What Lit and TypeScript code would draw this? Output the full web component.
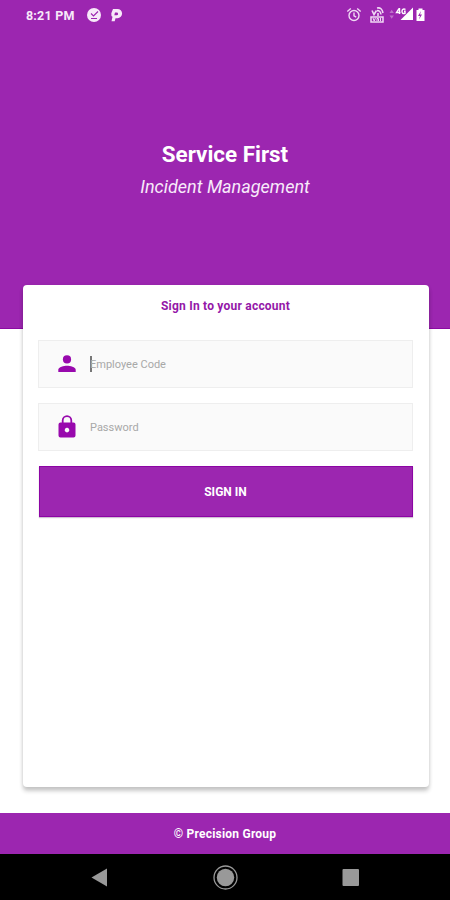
import { LitElement, html, css, svg } from "lit";
import { customElement } from "lit/decorators.js";

const person = svg`<circle cx="9" cy="4.400" r="4.100"/><path d="M.3 17v-2.200C.3 12 6 10.800 9 10.800s8.700 1.200 8.700 4V17z"/>`;

@customElement("app-root")
export class AppRoot extends LitElement {
  static styles = css`
    :host {
      display: flex;
      flex-direction: column;
      width: 450px;
      height: 900px;
      overflow: hidden;
      background: #fff;
      font-family: Roboto, "Liberation Sans", sans-serif;
      --purple: #9c26b0;
    }
    * { box-sizing: border-box; }
    svg { display: block; flex: none; }
    .hero {
      flex: none;
      height: 329px;
      background: var(--purple);
      border-bottom: 1px solid #8c0aa3;
      color: #fff;
      text-align: center;
    }
    .status {
      display: flex;
      align-items: center;
      height: 30px;
      padding: 0 25px 0 26px;
      color: #f7e9f9;
    }
    .time { font-size: 12.500px; font-weight: 700; letter-spacing: .2px; width: 60px; text-align: left; white-space: nowrap; }
    .right { margin-left: auto; }
    h1 { margin: 110px 0 0; font-size: 22.400px; line-height: 28px; font-weight: 700; }
    .sub { margin: 7px 0 0; font-size: 18px; line-height: 24px; font-style: italic; color: #f8eafa; }
    .card {
      flex: none;
      height: 502px;
      margin: -44px 21.500px 0 22.500px;
      padding: 0 15.500px;
      background: #fff;
      border-radius: 4px;
      box-shadow: 0 4px 4px rgba(0, 0, 0, .2), 0 1px 4px rgba(0, 0, 0, .08);
    }
    .title {
      margin: 0 0 14px;
      padding-top: 11px;
      height: 41px;
      text-align: center;
      font-size: 12px;
      line-height: 20px;
      font-weight: 700;
      letter-spacing: .22px;
      color: #9417a8;
    }
    .field {
      display: flex;
      align-items: center;
      height: 48px;
      margin-bottom: 15px;
      padding-left: 19px;
      background: #fafafa;
      border: 1.500px solid #eee;
      font-size: 11px;
      color: #a8a8a8;
    }
    .icon { width: 18px; margin-right: 14px; fill: #9809ad; }
    .caret { width: 1.500px; height: 16px; background: #777; margin-right: -1.500px; }
    .button {
      display: flex;
      align-items: center;
      justify-content: center;
      width: 374px;
      height: 51px;
      margin: 0 auto;
      border: 1px solid #8c05a4;
      background: var(--purple);
      color: #fff;
      font: 700 12px Roboto, sans-serif;
      box-shadow: 0 1px 1px rgba(100, 50, 110, .3);
    }
    .footer {
      flex: none;
      height: 41px;
      margin-top: 26px;
      background: var(--purple);
      color: #fff;
      text-align: center;
      font-size: 12px;
      line-height: 42px;
      font-weight: 700;
      letter-spacing: .22px;
    }
    .nav { flex: 1; background: #000; }
  `;

  render() {
    return html`
      <header class="hero">
        <div class="status">
          <span class="time">8:21 PM</span>
          <svg width="40" height="20" viewBox="86 5 40 20">
            <circle cx="94" cy="15" r="7" fill="#f7e9f9"/>
            <path d="M91 13.500l2.500 2.500 4.500-4.500M91 18.500h6" fill="none" stroke="#9c26b0" stroke-width="1.100"/>
            <path fill-rule="evenodd" d="M113 9h4.500a4.600 4.600 0 0 1 0 9.200h-2l-.8 3h-3.200l1-4.500q-1.500-.7-1.200-3.500zM115 12.500l-.7 2.800h2.400a1.400 1.400 0 0 0 0-2.800z" fill="#f7e9f9"/>
          </svg>
          <svg class="right" width="80" height="20" viewBox="345 5 80 20">
            <g fill="none" stroke="#f0d9f4" stroke-width="1.400">
              <circle cx="354" cy="15.500" r="5"/>
              <path d="M354 12.500v3.300l2.200 1.300M347.300 11.500l3.500-3M360.700 11.500l-3.500-3"/>
              <path d="M372 10.500l2 4 2.500-4M377 8q5-1 6 5M377 10.500q3.500 0 4 4M378 13v3" stroke-width="1.600"/>
              <rect x="371" y="17" width="12" height="5" stroke-width="1.500"/>
              <path d="M373 18l1.200 3 1.200-3M377 21v-2.500h1.500V21M380.500 18v3" stroke-width="1"/>
            </g>
            <path d="M389.500 13l2.200-3.200 2.200 3.200zM389.500 15.500l2.200 3.200 2.200-3.200z" fill="#bd70ca"/>
            <path d="M413 7.500V20H400.500z" fill="#fff"/>
            <path d="M399 8.500l-2.500 4h4M399.500 8v6M405.500 9.300q-3.500-1-3.500 2t3 2v-2h-1" fill="none" stroke="#fff" stroke-width="1.400"/>
            <path d="M416.500 10h2V8.500h4V10h2v11h-8z" fill="#fff"/>
            <path d="M421 11l-3 5h2l-1 3.500 3-5h-2z" fill="#9c26b0"/>
          </svg>
        </div>
        <h1>Service First</h1>
        <p class="sub">Incident Management</p>
      </header>
      <main class="card">
        <h2 class="title">Sign In to your account</h2>
        <div class="field">
          <svg class="icon" width="18" height="18" viewBox="0 0 18 18">${person}</svg>
          <span class="caret"></span><span class="employee">Employee Code</span>
        </div>
        <div class="field">
          <svg class="icon" width="18" height="24" viewBox="0 0 18 24">
            <path fill-rule="evenodd" d="M2.500 7.500h1.300V5.500a5.200 5.200 0 0 1 10.400 0v2h1.300q2 0 2 2v11q0 2-2 2h-13q-2 0-2-2v-11q0-2 2-2zm3.100 0h6.800V5.500a3.400 3.400 0 0 0-6.800 0zM9 12.800a2.300 2.300 0 1 0 .01 0z"/>
          </svg>
          <span class="password">Password</span>
        </div>
        <button class="button">SIGN IN</button>
      </main>
      <footer class="footer">© Precision Group</footer>
      <nav class="nav">
        <svg width="450" height="46" viewBox="0 854 450 46">
          <path d="M91.500 877.500L107 868.500v18z" fill="#999"/>
          <circle cx="225.500" cy="877.500" r="8.700" fill="#999"/>
          <circle cx="225.500" cy="877.500" r="11.500" fill="none" stroke="#999" stroke-width="1.300"/>
          <rect x="342.500" y="869" width="16.500" height="17" rx="1" fill="#999"/>
        </svg>
      </nav>
    `;
  }
}
